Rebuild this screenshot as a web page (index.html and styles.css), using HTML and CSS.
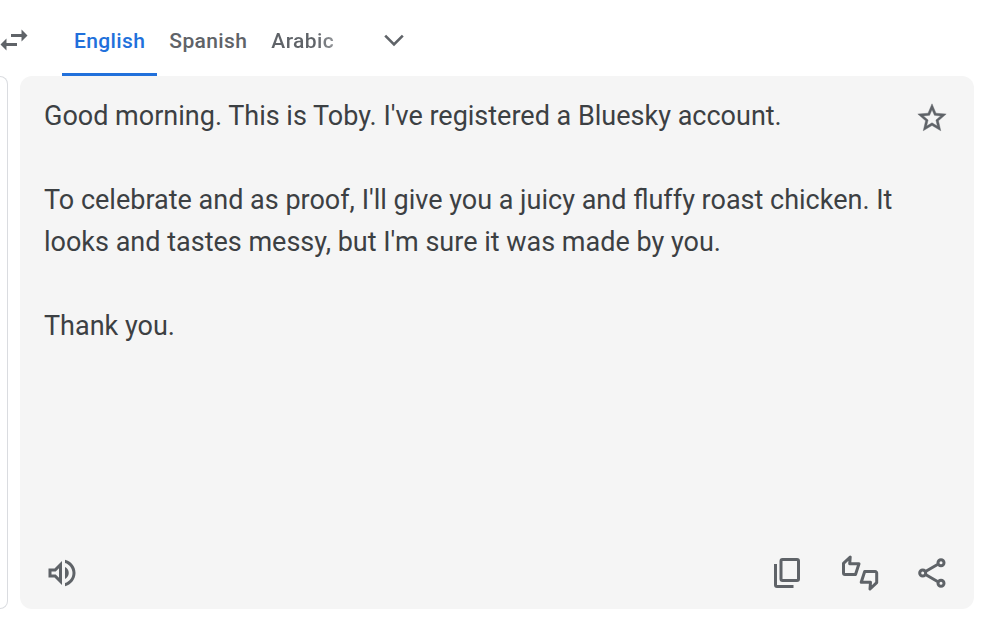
FILE: index.html
```
<!doctype html>
<html lang="en">
<head>
<meta charset="utf-8">
<title>Translate</title>
<link rel="stylesheet" href="styles.css">
</head>
<body>
<header class="langs">
	<button class="swap" aria-label="Swap languages">
		<svg width="36" height="36" viewBox="0 0 24 24"><path d="M6.99 11L3 15l3.99 4v-3H14v-2H6.99v-3zM21 9l-3.99-4v3H10v2h7.01v3L21 9z"/></svg>
	</button>
	<nav class="tabs">
		<a class="tab active">English</a>
		<a class="tab">Spanish</a>
		<a class="tab last">Arabic</a>
	</nav>
	<button class="more" aria-label="More languages">
		<svg width="24" height="24" viewBox="0 0 24 24"><path class="line thin" d="M3.2 7.700l8.800 8.800 8.800-8.800"/></svg>
	</button>
</header>
<main class="panes">
	<section class="source"></section>
	<section class="result">
		<div class="top">
			<div class="text">
				<p>Good morning. This is Toby. I've registered a Bluesky account.</p>
				<p>To celebrate and as proof, I'll give you a juicy and fluffy roast chicken. It looks and tastes messy, but I'm sure it was made by you.</p>
				<p>Thank you.</p>
			</div>
			<button class="star" aria-label="Save translation">
				<svg width="34" height="34" viewBox="0 0 24 24"><path class="bold" d="M22 9.24l-7.19-.62L12 2 9.19 8.63 2 9.24l5.46 4.73L5.82 21 12 17.27 18.18 21l-1.63-7.03L22 9.24zM12 15.4l-3.76 2.27 1-4.28-3.32-2.88 4.38-.38L12 6.1l1.71 4.04 4.38.38-3.32 2.88 1 4.28L12 15.4z"/></svg>
			</button>
		</div>
		<div class="tools">
			<button class="listen" aria-label="Listen">
				<svg width="36" height="36" viewBox="0 0 24 24"><path d="M3 9v6h4l5 5V4L7 9H3zm7-.17v6.34L7.83 13H5v-2h2.83L10 8.83zM16.5 12A4.5 4.5 0 0 0 14 7.97v8.05c1.48-.73 2.5-2.25 2.5-4.02zM14 3.23v2.06c2.89.86 5 3.54 5 6.71s-2.11 5.85-5 6.71v2.06c4.01-.91 7-4.49 7-8.77s-2.99-7.86-7-8.77z"/></svg>
			</button>
			<button aria-label="Copy">
				<svg width="36" height="36" viewBox="0 0 36 36"><path class="line" d="M12.5 4.5H27A1.500 1.500 0 0 1 28.500 6v18a1.500 1.500 0 0 1-1.500 1.500H12.500A1.500 1.500 0 0 1 11 24V6a1.500 1.500 0 0 1 1.500-1.500zM5.500 9v21A1.500 1.500 0 0 0 7 31.500h16.500"/></svg>
			</button>
			<button aria-label="Rate">
				<svg width="36" height="36" viewBox="0 0 36 36"><path class="line round" d="M1.500 8.300L8.200 2 7.700 8.700H17L13.500 19.500H3A1.500 1.500 0 0 1 1.500 18zM34.700 27.700L28 34l.5-6.700H19.200L22.700 16.500H33.200A1.500 1.500 0 0 1 34.700 18z"/></svg>
			</button>
			<button aria-label="Share">
				<svg width="36" height="36" viewBox="0 0 36 36"><path class="line" d="M11.500 16.500l12-7M11.500 19.500l12 7"/><circle class="line" cx="8.700" cy="18" r="3"/><circle class="line" cx="27" cy="7.700" r="3"/><circle class="line" cx="27" cy="28.300" r="3"/></svg>
			</button>
		</div>
	</section>
</main>
</body>
</html>
```
FILE: styles.css
```
* {
	box-sizing: border-box;
}
body {
	margin: 0;
	height: 618px;
	overflow: hidden;
	background: #fff;
	font-family: Roboto, "Liberation Sans", sans-serif;
	color: #3c4043;
}
button {
	display: block;
	padding: 0;
	border: 0;
	background: none;
}
svg {
	display: block;
	overflow: visible;
	fill: #5f6368;
}
.line {
	fill: none;
	stroke: #5f6368;
	stroke-width: 3;
}
.thin {
	stroke-width: 2.6;
}
.round {
	stroke-linejoin: round;
}
.bold {
	stroke: #5f6368;
	stroke-width: 0.3;
}
.langs {
	display: flex;
	height: 76px;
}
.swap {
	margin: 22px 30px 0 -4px;
	height: 36px;
}
.tabs {
	display: flex;
}
.tab {
	padding: 5px 12px 0;
	height: 76px;
	line-height: 72px;
	font-size: 21px;
	font-weight: 500;
	letter-spacing: 0.38px;
	color: #5f6368;
}
.active {
	color: #2170db;
	border-bottom: 3px solid #2170db;
}
.last {
	background: linear-gradient(90deg, #5f6368 65%, #b4b6b9 100%);
	-webkit-background-clip: text;
	background-clip: text;
	color: transparent;
}
.more {
	margin: 28px 0 0 36px;
	height: 24px;
}
.panes {
	display: flex;
	gap: 12px;
	height: 533px;
}
.source {
	width: 8px;
	border: 1px solid #dadce0;
	border-left: 0;
	border-radius: 0 12px 12px 0;
}
.result {
	display: flex;
	flex-direction: column;
	justify-content: space-between;
	width: 954px;
	padding: 19px 24px 18px;
	border-radius: 12px;
	background: #f5f5f5;
}
.top {
	display: flex;
	justify-content: space-between;
}
.text {
	width: 860px;
	font-size: 27px;
	line-height: 42px;
}
.text p {
	margin: 0 0 42px;
}
.star {
	margin: 6px 1px 0 0;
	height: 34px;
}
.tools {
	display: flex;
	gap: 36px;
}
.listen {
	margin-right: auto;
}
```
